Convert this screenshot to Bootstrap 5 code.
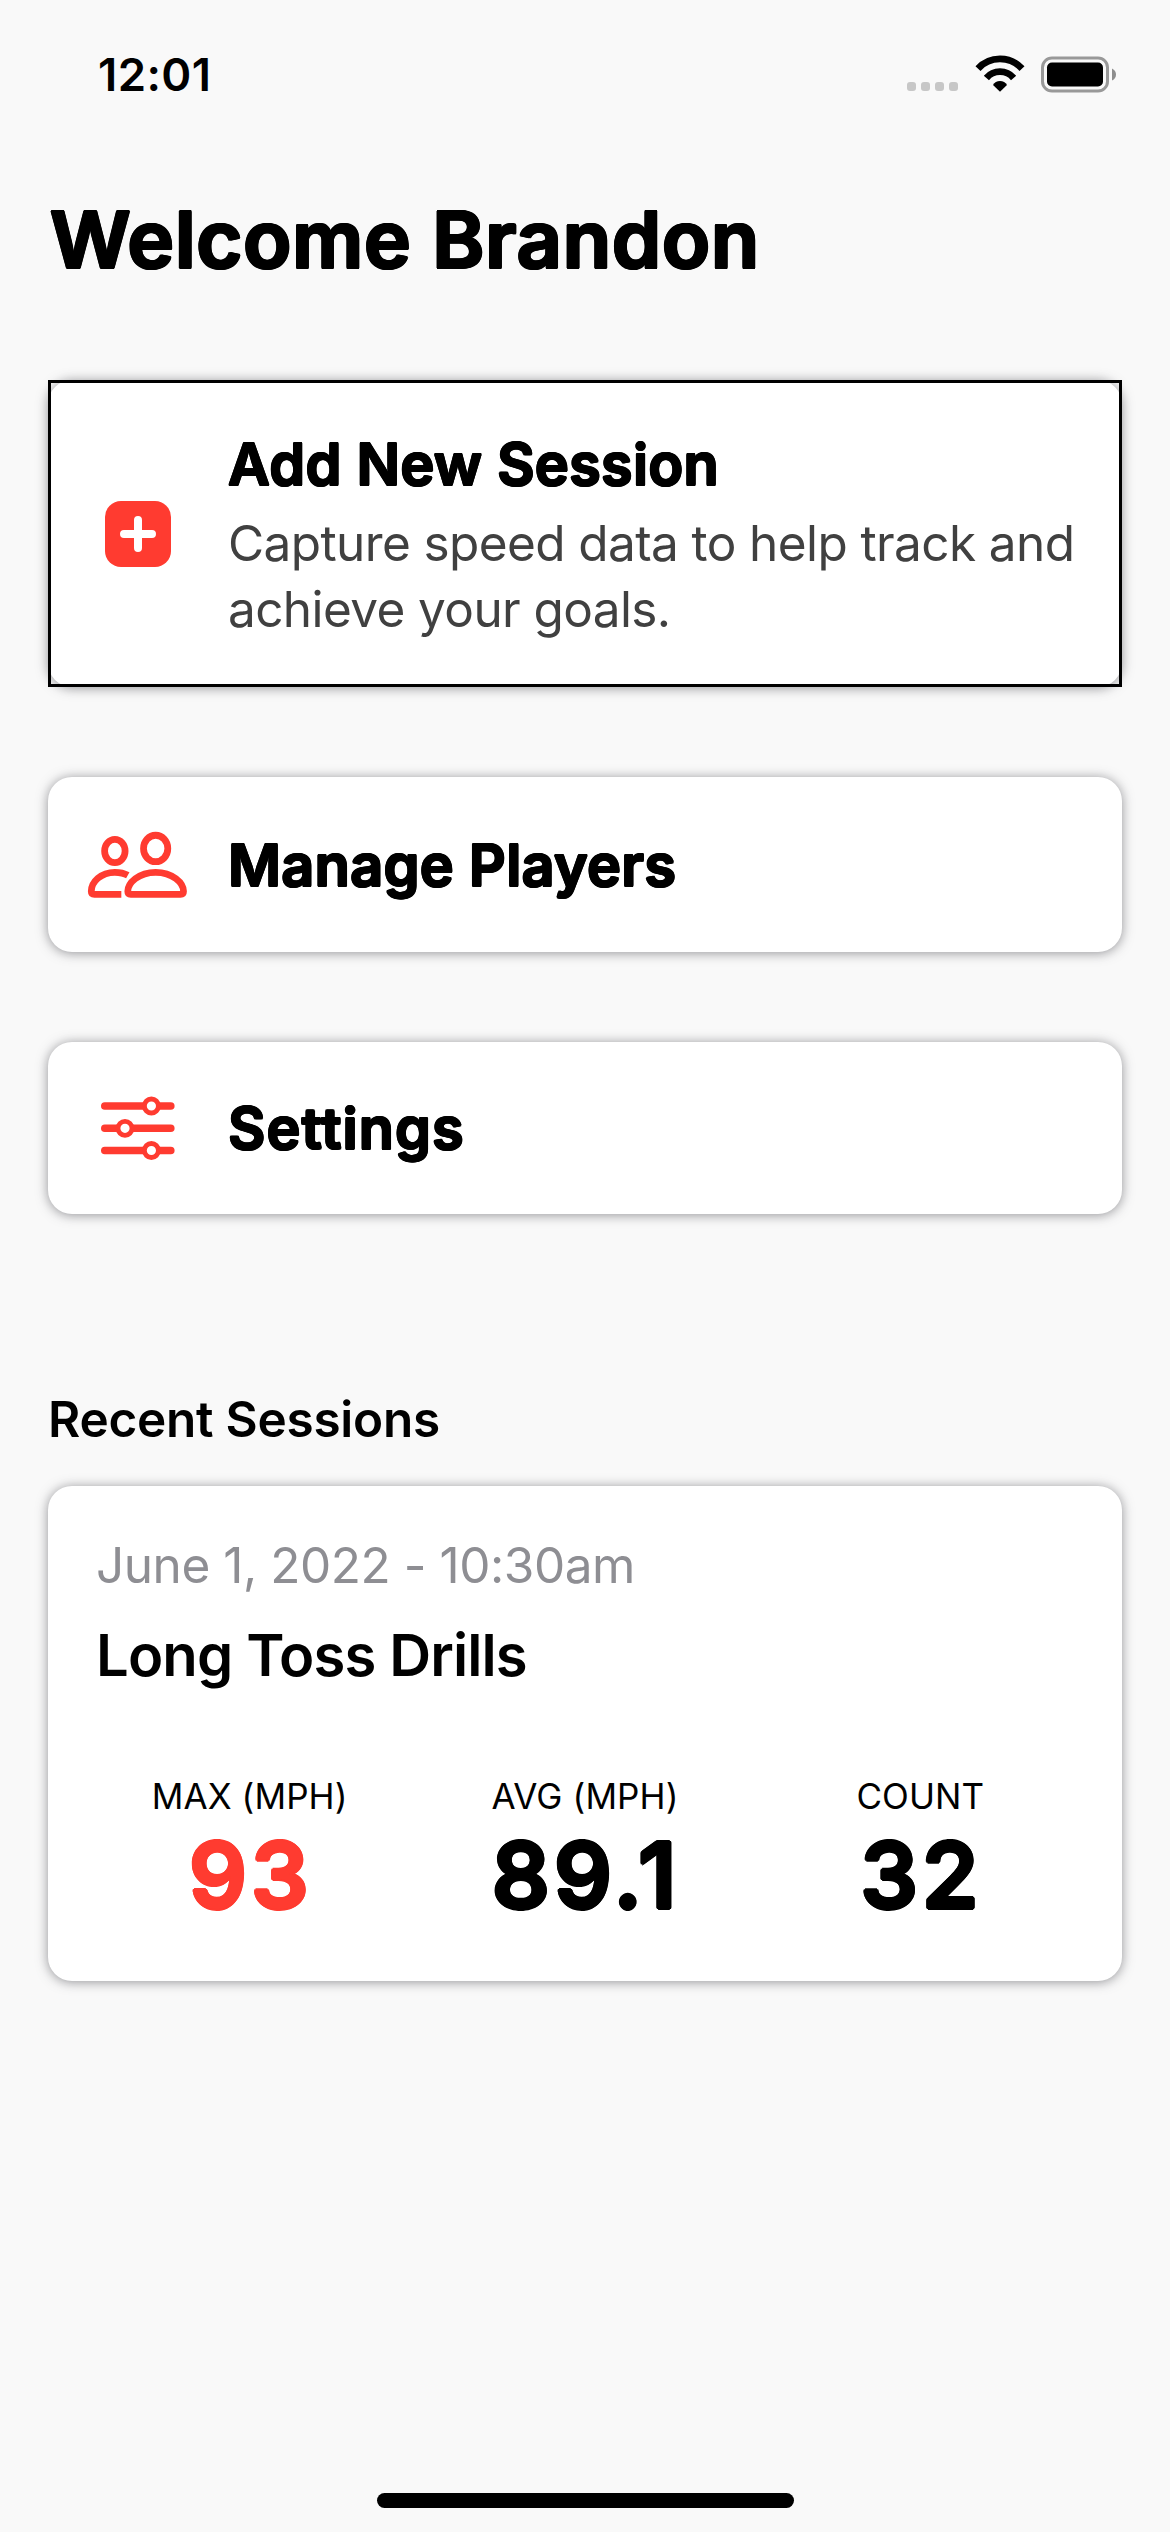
<!DOCTYPE html>
<html lang="en">
<head>
<meta charset="utf-8">
<meta name="viewport" content="width=device-width, initial-scale=1">
<title>Welcome</title>
<link href="https://cdn.jsdelivr.net/npm/bootstrap@5.3.0/dist/css/bootstrap.min.css" rel="stylesheet">
<style>
  body { background: #f9f9f9; color: #000; font-family: Inter, "Liberation Sans", sans-serif; }
  .screen { min-height: 2532px; }
  .statusbar { height: 149px; padding: 0 53px 0 98px; }
  .clock { font-size: 45.5px; font-weight: 600; line-height: 1; letter-spacing: .4px; }
  .signal { gap: 5px; margin: 24px 14px 0 0; }
  .signal i { width: 9px; height: 9px; border-radius: 3px; background: #c7c7c7; }
  .wifi { margin-right: 11px; }
  .page-body { padding: 0 48px; }
  /* softens glyph corners by thickening a lighter weight in every direction */
  .soft { --r: .018em; --d: .013em; font-weight: 600; text-shadow: var(--r) 0, calc(-1 * var(--r)) 0, 0 var(--r), 0 calc(-1 * var(--r)), var(--d) var(--d), calc(-1 * var(--d)) var(--d), var(--d) calc(-1 * var(--d)), calc(-1 * var(--d)) calc(-1 * var(--d)); }
  .welcome { font-size: 79px; line-height: 100px; letter-spacing: .8px; margin: 40px 0 91px 2px; }
  .tile { background: #fff; border-radius: 24px; box-shadow: 0 1px 12px rgba(60,60,67,.55); color: #000; }
  .tile-icon { width: 100px; margin-left: 39px; margin-right: 41px; }
  .tile-title { font-size: 57.5px; line-height: 60px; letter-spacing: .3px; }
  .tile-new { height: 307px; }
  .tile-new .frame-line { position: absolute; inset: 0; border: 3px solid #000; }
  .tile-text { padding-top: 9px; }
  .tile-text p { color: #404040; font-size: 49.5px; line-height: 66px; letter-spacing: -.6px; margin: 16px 0 0; }
  .tile-players { height: 175px; margin-top: 90px; }
  .tile-settings { height: 172px; margin-top: 90px; }
  .tile-settings .tile-title { letter-spacing: 1.1px; }
  .recent { font-size: 49.5px; line-height: 60px; font-weight: 600; letter-spacing: -.25px; margin: 175px 0 37px; }
  .session { height: 495px; padding: 49px 34px 0; }
  .session-date { color: #8e8e93; font-size: 49.5px; line-height: 60px; letter-spacing: -.45px; padding-left: 14px; }
  .session-name { font-size: 58px; line-height: 60px; font-weight: 600; letter-spacing: -.87px; margin: 30px 0 91px; padding-left: 14px; }
  .stat-label { font-size: 35px; line-height: 40px; letter-spacing: .1px; }
  .stat-value { font-size: 91px; line-height: 90px; letter-spacing: 3.8px; margin: 14px -2px 0 0; }
  .red { color: #ff3b30; }
  .homebar { width: 417px; height: 15px; border-radius: 8px; background: #000; margin-bottom: 24px; }
</style>
<script src="https://cdn.jsdelivr.net/npm/bootstrap@5.3.0/dist/js/bootstrap.bundle.min.js"></script>
</head>
<body>
<div class="screen d-flex flex-column">
  <header class="statusbar d-flex align-items-center">
    <span class="clock me-auto">12:01</span>
    <span class="signal d-flex"><i></i><i></i><i></i><i></i></span>
    <svg class="wifi" width="57" height="40" viewBox="971 54.5 57 40" fill="none" stroke="#000">
      <path d="M977 68.1A29.8 29.8 0 0 1 1021 68.1" stroke-width="6.8"/>
      <path d="M985.4 77.5A17.8 17.8 0 0 1 1012.6 77.5" stroke-width="6.8"/>
      <path d="M992 84.6A8 8 0 0 1 1006 84.6L999 91.2Z" fill="#000" stroke="none"/>
    </svg>
    <svg width="77" height="38" viewBox="1039 55.5 77 38">
      <rect x="1041.5" y="57.5" width="65" height="33" rx="9.5" fill="none" stroke="#999" stroke-width="3"/>
      <rect x="1046" y="62" width="56" height="24" rx="5"/>
      <path d="M1111 68Q1115 70 1115 74T1111 80Z" fill="#8e8e8e"/>
    </svg>
  </header>

  <main class="page-body d-flex flex-column">
    <h1 class="welcome soft">Welcome Brandon</h1>

    <a href="#" class="tile tile-new position-relative d-flex align-items-center text-decoration-none">
      <svg class="tile-icon" height="66" viewBox="87 500 100 66">
        <rect x="105" y="500" width="66" height="66" rx="16" fill="#ff3b30"/>
        <path d="M124 533h28M138 519v28" stroke="#fff" stroke-width="8" stroke-linecap="round"/>
      </svg>
      <div class="tile-text text-nowrap">
        <h2 class="tile-title soft mb-0">Add New Session</h2>
        <p>Capture speed data to help track and<br>achieve your goals.</p>
      </div>
      <span class="frame-line"></span>
    </a>

    <a href="#" class="tile tile-players d-flex align-items-center text-decoration-none">
      <svg class="tile-icon" height="68" viewBox="87 831 100.5 68" fill="none" stroke="#ff3b30" stroke-width="6.8">
        <ellipse cx="115" cy="851" rx="10.3" ry="11.7"/>
        <ellipse cx="156" cy="848.4" rx="12.2" ry="13.3"/>
        <path d="M128 875.3C124 873 120 872.3 115 872.3C101 872.3 91.3 882 91.3 891.5Q91.3 894.6 94.5 894.6H121.5"/>
        <path d="M156 872.3C139 872.3 128 883 128 891.5Q128 894.6 131 894.6H181Q184 894.6 184 891.5C184 883 173 872.3 156 872.3Z"/>
      </svg>
      <h2 class="tile-title soft mb-0">Manage Players</h2>
    </a>

    <a href="#" class="tile tile-settings d-flex align-items-center text-decoration-none">
      <svg class="tile-icon" height="66" viewBox="87 1095 100 66" fill="#fff" stroke="#ff3b30">
        <path d="M104.8 1106h66M104.8 1128.3h66M104.8 1150.5h66" stroke-width="7.6" stroke-linecap="round"/>
        <g stroke-width="4.8">
          <circle cx="151.4" cy="1106" r="7"/><circle cx="125" cy="1128.3" r="7"/><circle cx="151.4" cy="1150.5" r="7"/>
        </g>
      </svg>
      <h2 class="tile-title soft mb-0">Settings</h2>
    </a>

    <h2 class="recent">Recent Sessions</h2>
    <section class="tile session">
      <div class="session-date">June 1, 2022 - 10:30am</div>
      <h3 class="session-name">Long Toss Drills</h3>
      <div class="row g-0 text-center">
        <div class="col"><div class="stat-label">MAX (MPH)</div><div class="stat-value soft red">93</div></div>
        <div class="col"><div class="stat-label">AVG (MPH)</div><div class="stat-value soft">89.1</div></div>
        <div class="col"><div class="stat-label">COUNT</div><div class="stat-value soft">32</div></div>
      </div>
    </section>
  </main>

  <div class="homebar mt-auto mx-auto"></div>
</div>
</body>
</html>
